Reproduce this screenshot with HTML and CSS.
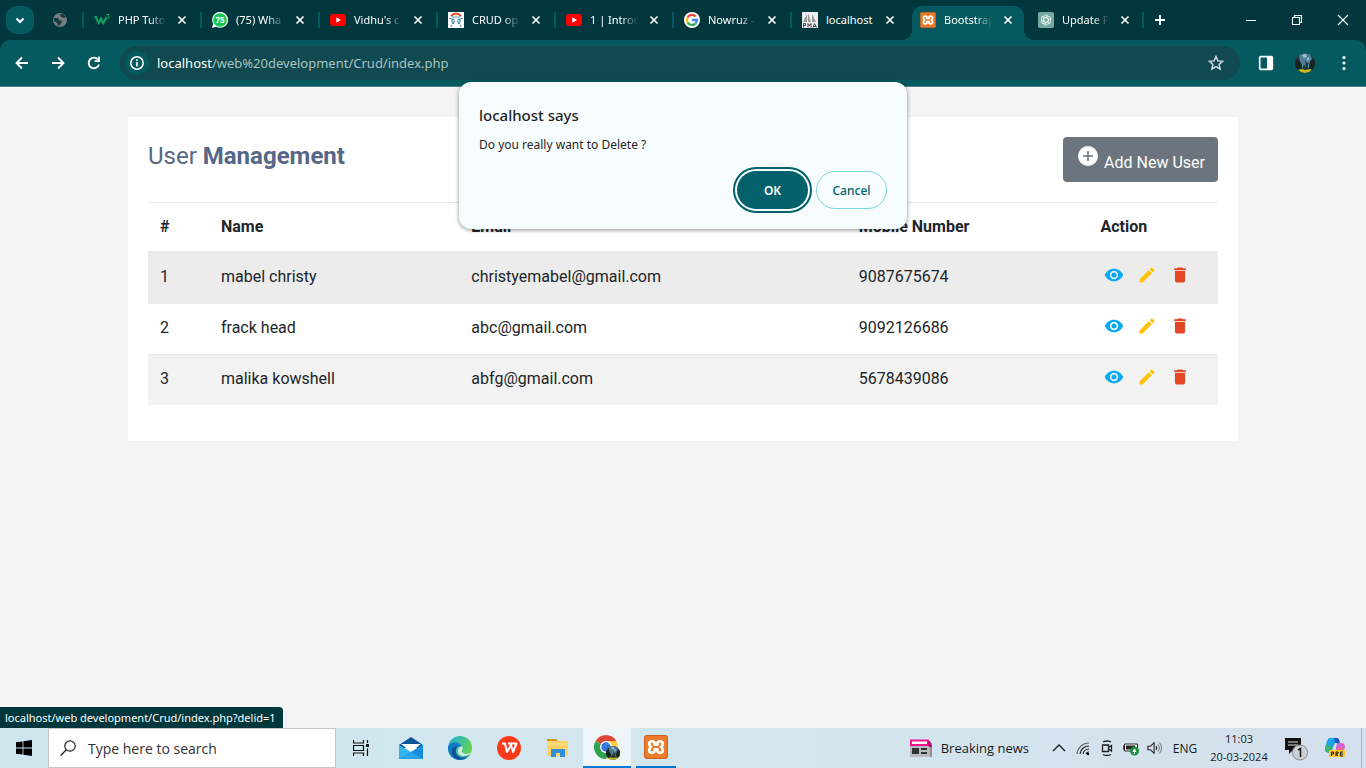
FILE: index.html
```html
<!DOCTYPE html>
<html lang="en">
<head>
<meta charset="utf-8">
<meta name="viewport" content="width=device-width, initial-scale=1">
<title>User Management</title>
<link rel="stylesheet" href="styles.css">
</head>
<body>
<svg class="sprite" aria-hidden="true">
  <symbol id="close" viewBox="0 0 16 16"><path d="M4.500 4.500l7 7M11.500 4.500l-7 7" fill="none" stroke="currentColor" stroke-width="1.700"/></symbol>
  <symbol id="youtube" viewBox="0 0 16 16"><rect y="2" width="16" height="12" rx="3" fill="#f00"/><path d="M6.300 5.300v5.400L11 8z" fill="#fff"/></symbol>
  <symbol id="xampp" viewBox="0 0 24 24"><rect x=".5" y=".5" width="23" height="23" rx="2" fill="#ed7a28" stroke="#c9601c"/><path d="M10.500 7.500C8 5 4.800 6.500 5.300 9.300Q5.600 11 7 12q-1.400 1-1.700 2.700C4.800 17.500 8 19 10.500 16.500V14.300h3v2.200c2.500 2.500 5.700 1 5.200-1.800Q18.400 13 17 12q1.400-1 1.700-2.700C19.200 6.500 16 5 13.500 7.500v2.200h-3z" fill="none" stroke="#fff" stroke-width="2.700" stroke-linejoin="round"/></symbol>
  <symbol id="eye" viewBox="0 0 24 24"><path fill="currentColor" d="M12 4.500C7 4.500 2.730 7.610 1 12c1.730 4.390 6 7.500 11 7.500s9.270-3.110 11-7.500c-1.730-4.390-6-7.500-11-7.500zM12 17a5 5 0 1 1 0-10 5 5 0 0 1 0 10zm0-8a3 3 0 1 0 0 6 3 3 0 0 0 0-6z"/></symbol>
  <symbol id="pencil" viewBox="0 0 24 24"><path fill="currentColor" d="M3 17.250V21h3.750L17.810 9.940l-3.750-3.750zM20.710 7.040a1 1 0 0 0 0-1.410l-2.340-2.340a1 1 0 0 0-1.410 0l-1.830 1.830 3.750 3.750z"/></symbol>
  <symbol id="trash" viewBox="0 0 24 24"><path fill="currentColor" d="M6 19a2 2 0 0 0 2 2h8a2 2 0 0 0 2-2V7H6zM19 4h-3.500l-1-1h-5l-1 1H5v2h14z"/></symbol>
  <symbol id="avatar" viewBox="0 0 20 20"><clipPath id="avatar-clip"><circle cx="10" cy="10" r="10"/></clipPath><g clip-path="url(#avatar-clip)"><path fill="#263437" d="M0 0h20v20H0z"/><path fill="#4f7f98" d="M4 2l5-2 6 1 2 5-2 5-4-2-2 4-4-4z"/><path fill="#92bfd2" d="M7 2l4-1 1 3-3 1zM12 5l2-1v3l-2 1z"/><path fill="#18251e" d="M0 6l5 2 2 7-7 2zM15 8l5-3v10l-5 2z"/><path fill="#7d3f38" d="M10 7h1v7h-1z"/><path fill="#4c92a9" d="M7 11h1v4H7zM13 11h1v4h-1z"/><path fill="#c6b820" d="M3 17l4-1 3 1 5-1 2 1-4 3H6z"/></g></symbol>
</svg>

<header class="browser">
  <div class="tabstrip">
    <button class="tab-search" aria-label="Search tabs"><svg viewBox="0 0 16 16"><path d="M4.500 6.500L8 10l3.500-3.500" fill="none" stroke="currentColor" stroke-width="2"/></svg></button>
    <a class="tab-mini" href="#" aria-label="Pinned page"><svg viewBox="0 0 16 16"><circle cx="8" cy="8" r="7" fill="#777b7e"/><path d="M2 6h4l1 2 3 1-1 3-3 2-1-3-3-2zM8 2l1 3 3 1 2-1-3-3z" fill="#153c42"/></svg></a>
    <div class="tab"><a href="#"><svg viewBox="0 0 16 16"><path d="M0 4h2.800l1.900 5L7 4l2.300 5L12 4l1 2-3.500 7L7 9.500 4.500 13z" fill="#12a35e"/><path d="M12.500 2.500H15l-1 2c2 0 1.500 2.500-1.500 2" fill="none" stroke="#12a35e"/></svg><span class="faded">PHP Tuto</span></a><button aria-label="Close tab"><svg><use href="#close"/></svg></button></div>
    <div class="tab"><a href="#"><svg viewBox="0 0 16 16"><path d="M0 16l1.200-4.200a8 8 0 1 1 3 3z" fill="#e9fff0"/><circle cx="8" cy="8" r="6.800" fill="#16c653"/><text x="8" y="11" class="badge-text">75</text></svg><span class="faded">(75) Wha</span></a><button aria-label="Close tab"><svg><use href="#close"/></svg></button></div>
    <div class="tab"><a href="#"><svg><use href="#youtube"/></svg><span class="faded">Vidhu's c</span></a><button aria-label="Close tab"><svg><use href="#close"/></svg></button></div>
    <div class="tab"><a href="#"><svg viewBox="0 0 16 16"><path fill="#fff" d="M0 0h16v16H0z"/><path d="M3 4q5-5 10 0" fill="none" stroke="#d6542c" stroke-width="2"/><path d="M1 6l3 1M15 6l-3 1M4 5h8M4 13l-1 2M12 13l1 2" stroke="#5c9dbd" stroke-width="1.200"/><path d="M5 6.500q3 2 0 5.500q-3-3.500 0-5.500zM11 6.500q3 2 0 5.500q-3-3.500 0-5.500z" fill="#b9e2f1" stroke="#4789aa"/></svg><span class="faded">CRUD op</span></a><button aria-label="Close tab"><svg><use href="#close"/></svg></button></div>
    <div class="tab"><a href="#"><svg><use href="#youtube"/></svg><span class="faded">1 | Introd</span></a><button aria-label="Close tab"><svg><use href="#close"/></svg></button></div>
    <div class="tab"><a href="#"><svg viewBox="0 0 16 16"><circle cx="8" cy="8" r="8" fill="#fff"/><g fill="none" stroke-width="2.300"><path stroke="#ea4335" d="M3.600 5.500A5 5 0 0 1 11.600 4.500"/><path stroke="#fbbc05" d="M3.600 5.500a5 5 0 0 0 0 5"/><path stroke="#34a853" d="M3.600 10.500a5 5 0 0 0 7.900 1"/><path stroke="#4285f4" d="M11.500 11.500A5 5 0 0 0 13 8H8"/></g></svg><span class="faded">Nowruz -</span></a><button aria-label="Close tab"><svg><use href="#close"/></svg></button></div>
    <div class="tab"><a href="#"><svg viewBox="0 0 16 16"><path fill="#eee" d="M0 0h16v16H0z"/><path fill="#999" d="M1 10l4-8v8zM6 10V1l3 9zM10 10V2l4 8z"/><path d="M1.500 15.500v-4h2v2h-2M6 15.500v-4l1.500 2 1.500-2v4M11 15.500l1.500-4 2 4M12 14.500h2" fill="none" stroke="#444"/></svg><span>localhost</span></a><button aria-label="Close tab"><svg><use href="#close"/></svg></button></div>
    <div class="tab tab-active"><a href="#" aria-current="page"><svg><use href="#xampp"/></svg><span class="faded">Bootstrap</span></a><button aria-label="Close tab"><svg><use href="#close"/></svg></button></div>
    <div class="tab tab-last"><a href="#"><svg viewBox="0 0 16 16"><rect width="16" height="16" rx="2" fill="#74aa9c"/><g fill="none" stroke="#e9f4f0" stroke-width=".9"><path id="petal" d="M7.800 5.400l2.600 1.500v3.500a2.600 2.600 0 0 1-4.700 1.500"/><use href="#petal" transform="rotate(60 8 8)"/><use href="#petal" transform="rotate(120 8 8)"/><use href="#petal" transform="rotate(180 8 8)"/><use href="#petal" transform="rotate(240 8 8)"/><use href="#petal" transform="rotate(300 8 8)"/></g></svg><span class="faded">Update P</span></a><button aria-label="Close tab"><svg><use href="#close"/></svg></button></div>
    <button class="new-tab" aria-label="New tab"><svg viewBox="0 0 16 16"><path d="M8 3v10M3 8h10" stroke="currentColor" stroke-width="1.800"/></svg></button>
    <div class="window-controls">
      <button aria-label="Minimize"><svg viewBox="0 0 12 12"><path d="M1 6.500h10" stroke="currentColor"/></svg></button>
      <button aria-label="Restore"><svg viewBox="0 0 12 12"><path d="M1.500 3.500h7v7h-7zM3.500 3.500v-2h7v7h-2" fill="none" stroke="currentColor" stroke-width="1.100"/></svg></button>
      <button aria-label="Close window"><svg viewBox="0 0 12 12"><path d="M1 1l10 10M11 1L1 11" stroke="currentColor" stroke-width="1.100"/></svg></button>
    </div>
  </div>
  <div class="toolbar">
    <button class="tool" aria-label="Back"><svg viewBox="0 0 16 16"><path d="M14 8H3M8 2.500L2.500 8 8 13.500" fill="none" stroke="currentColor" stroke-width="1.900"/></svg></button>
    <button class="tool" aria-label="Forward"><svg viewBox="0 0 16 16"><path d="M2 8h11M8 2.500L13.500 8 8 13.500" fill="none" stroke="currentColor" stroke-width="1.900"/></svg></button>
    <button class="tool" aria-label="Reload"><svg viewBox="0 0 16 16"><path d="M13 9.500A5.300 5.300 0 1 1 12 4.500" fill="none" stroke="currentColor" stroke-width="1.900"/><path d="M14 1.500V7H8.500V5.200h3.700V1.500z" fill="currentColor"/></svg></button>
    <div class="omnibox">
      <button class="site-info" aria-label="Site information"><svg viewBox="0 0 16 16"><circle cx="8" cy="8" r="6.200" fill="none" stroke="currentColor" stroke-width="1.500"/><path d="M8 7v4.500M8 4.300v1.700" stroke="currentColor" stroke-width="1.600"/></svg></button>
      <div class="url"><b>localhost</b>/web%20development/Crud/index.php</div>
      <button class="star" aria-label="Bookmark"><svg viewBox="0 0 16 16"><path d="M8 1.500l1.900 4.400 4.700.4-3.600 3.100 1.100 4.700L8 11.600l-4.100 2.500L5 9.400 1.400 6.300l4.700-.4z" fill="none" stroke="currentColor" stroke-width="1.400"/></svg></button>
    </div>
    <button class="tool side" aria-label="Side panel"><svg viewBox="0 0 16 16"><rect x="1.700" y="1.700" width="12.600" height="12.600" rx="1" fill="none" stroke="currentColor" stroke-width="1.700"/><path d="M9 1.500h5.500v13H9z" fill="currentColor"/></svg></button>
    <button class="tool profile" aria-label="Profile"><svg><use href="#avatar"/></svg></button>
    <button class="tool menu" aria-label="Menu"><svg viewBox="0 0 16 16"><g fill="currentColor"><circle cx="8" cy="2.500" r="1.600"/><circle cx="8" cy="8" r="1.600"/><circle cx="8" cy="13.500" r="1.600"/></g></svg></button>
  </div>
</header>

<main class="page">
  <section class="card">
    <div class="card-head">
      <h1>User <b>Management</b></h1>
      <a class="add-user" href="#"><svg viewBox="0 0 24 24"><path fill="currentColor" fill-rule="evenodd" d="M12 2a10 10 0 1 0 0 20 10 10 0 0 0 0-20zM11.200 7h1.600v4.200H17v1.600h-4.200V17h-1.600v-4.200H7v-1.600h4.200z"/></svg><span>Add New User</span></a>
    </div>
    <table class="users">
      <colgroup><col class="c-id"><col class="c-name"><col class="c-email"><col class="c-mobile"><col class="c-action"></colgroup>
      <thead><tr><th>#</th><th>Name</th><th>Email</th><th>Mobile Number</th><th>Action</th></tr></thead>
      <tbody>
        <tr class="hovered"><td>1</td><td>mabel christy</td><td>christyemabel@gmail.com</td><td>9087675674</td><td><div class="actions"><a class="view" href="#" aria-label="View"><svg><use href="#eye"/></svg></a><a class="edit" href="#" aria-label="Edit"><svg><use href="#pencil"/></svg></a><a class="delete" href="#" aria-label="Delete"><svg><use href="#trash"/></svg></a></div></td></tr>
        <tr><td>2</td><td>frack head</td><td>abc@gmail.com</td><td>9092126686</td><td><div class="actions"><a class="view" href="#" aria-label="View"><svg><use href="#eye"/></svg></a><a class="edit" href="#" aria-label="Edit"><svg><use href="#pencil"/></svg></a><a class="delete" href="#" aria-label="Delete"><svg><use href="#trash"/></svg></a></div></td></tr>
        <tr><td>3</td><td>malika kowshell</td><td>abfg@gmail.com</td><td>5678439086</td><td><div class="actions"><a class="view" href="#" aria-label="View"><svg><use href="#eye"/></svg></a><a class="edit" href="#" aria-label="Edit"><svg><use href="#pencil"/></svg></a><a class="delete" href="#" aria-label="Delete"><svg><use href="#trash"/></svg></a></div></td></tr>
      </tbody>
    </table>
  </section>
  <div class="link-status">localhost/web development/Crud/index.php?delid=1</div>
</main>

<div class="dialog" role="alertdialog" aria-labelledby="dialog-title" aria-describedby="dialog-text">
  <h2 id="dialog-title">localhost says</h2>
  <p id="dialog-text">Do you really want to Delete ?</p>
  <div class="dialog-buttons"><button class="ok">OK</button><button class="cancel">Cancel</button></div>
</div>

<footer class="taskbar">
  <button class="start" aria-label="Start"><svg viewBox="0 0 16 16"><path d="M0 2.300l6.600-.9v6.100H0zM7.400 1.300L16 0v7.500H7.400zM0 8.400h6.600v6.200L0 13.700zM7.400 8.400H16V16l-8.600-1.300z"/></svg></button>
  <label class="search"><svg viewBox="0 0 16 16"><circle cx="10" cy="6" r="5.200" fill="none" stroke="#222" stroke-width="1.200"/><path d="M6.300 9.700L.7 15.500" stroke="#222" stroke-width="1.300"/></svg><input type="text" placeholder="Type here to search" aria-label="Type here to search"></label>
  <nav class="apps">
    <button class="task-view" aria-label="Task view"><svg viewBox="0 0 16 16"><path d="M.5 0v3h10V0M.5 16v-3h10v3M.5 5.500h10v5H.5zM14.500 0v3M14.500 8.500V16" fill="none" stroke="#111" stroke-width="1.200"/><path d="M13 4h3v3h-3z" fill="#111"/></svg></button>
    <button aria-label="Mail"><svg viewBox="0 0 24 24"><path d="M0 9l12-8 12 8v3H0z" fill="#0b5394"/><path d="M2 8h20l-10 8z" fill="#fff"/><path d="M0 9l12 7 12-7v14H0z" fill="#35b4ed"/><path d="M24 9v14H0l12-7z" fill="#168cdc"/><path d="M0 23l12-7 12 7z" fill="#2aa5e8"/></svg></button>
    <button aria-label="Edge"><svg viewBox="0 0 24 24"><defs><linearGradient id="edge-a" x2="1" y2=".6"><stop stop-color="#1ba8df"/><stop offset="1" stop-color="#69d64d"/></linearGradient></defs><circle cx="12" cy="12" r="12" fill="url(#edge-a)"/><path d="M0 12C1 5 12 5 14 11c-4-2-7 1-6 5 1 5 8 7 14 2-3 5-7 6-10 6C5 24 0 19 0 12z" fill="#1276c4"/><path d="M8 13c-2 6 4 11 10 9-8 4-15-1-14-7 0-3 3-5 6-5-1 1-2 2-2 3z" fill="#124f99"/><path d="M14 10c2 3-1 4 0 6 2 3 7 2 9 0l-1 2c-4 3-12 3-12-3 0-3 2-4 4-5z" fill="#d4e9ee"/></svg></button>
    <button aria-label="WPS Office"><svg viewBox="0 0 24 24"><circle cx="12" cy="12" r="12" fill="#fb3a18"/><path d="M5 7.500h3L10 16l4-7 2 7 3.500-8.500H11" fill="none" stroke="#fff" stroke-width="2" stroke-linejoin="round"/></svg></button>
    <button aria-label="File Explorer"><svg viewBox="0 0 24 24"><path d="M1 3h9l2 2H1z" fill="#d79300"/><path d="M1 5h21v15H1z" fill="#ffd264"/><path d="M1 7h21v2H1z" fill="#ffdc82"/><path d="M5 21v-8h14v8h-5v-4h-4v4z" fill="#2f8ed8"/></svg></button>
    <button class="app-current" aria-label="Chrome"><svg viewBox="0 0 28 28"><circle cx="13" cy="14" r="12" fill="#fff"/><path d="M13 14L2.600 8a12 12 0 0 1 20.800 0z" fill="#df4739"/><path d="M13 14L2.600 8A12 12 0 0 0 13 26l5-9z" fill="#2ca44f"/><path d="M13 8h10.400A12 12 0 0 1 13 26l5-9z" fill="#fdd044"/><circle cx="13" cy="14" r="6" fill="#fff"/><circle cx="13" cy="14" r="4.700" fill="#3478df"/><use href="#avatar" x="13" y="13" width="14" height="14"/></svg></button>
    <button class="app-open" aria-label="XAMPP"><svg><use href="#xampp"/></svg></button>
  </nav>
  <div class="tray">
    <button class="news"><svg viewBox="0 0 22 18"><path d="M2 4h20v14H2z" fill="#8b8d91"/><path d="M0 6h20v12H0z" fill="#b9babd"/><path d="M1 1.500h17V6H1z" fill="#fff" stroke="#f0148a" stroke-width="2"/><path d="M18 2h2l2 6h-3z" fill="#b40069"/><path d="M2 9h7v6H2zM11 9h6v2h-6zM11 13h6v2h-6z" fill="#333"/></svg><span>Breaking news</span></button>
    <button class="chevron" aria-label="Hidden icons"><svg viewBox="0 0 14 16"><path d="M1 11l6-6 6 6" fill="none" stroke="#222" stroke-width="1.400"/></svg></button>
    <button aria-label="Network"><svg viewBox="0 0 16 16"><g fill="none" stroke="#222" stroke-width="1.200"><path d="M2 14A12 12 0 0 1 14 3" stroke="#666"/><path d="M5 14a9 9 0 0 1 9-8M8 14a6 6 0 0 1 6-5M11 14a3 3 0 0 1 3-2"/></g><circle cx="13" cy="14" r="1.200"/></svg></button>
    <button aria-label="Camera"><svg viewBox="0 0 16 16"><path d="M3.500 5h6v6.500h-6zM9.500 7.500l3-2v5.500l-3-2M4 2q4-2 8 0M4 14.500q4 2 8 0" fill="none" stroke="#222" stroke-width="1.300"/></svg></button>
    <button aria-label="Battery"><svg viewBox="0 0 16 16"><path d="M1.500 4h13v7h-13zM0 6h1v3H0z" fill="#fff" stroke="#222"/><path d="M3 5.500h9v4H3z" fill="#222"/><circle cx="11.500" cy="11" r="4.500" fill="#18933f"/><path d="M10 11.500l1.500-2.500 1.500 2.500zM11.500 9v5" fill="#fff" stroke="#fff"/></svg></button>
    <button aria-label="Volume"><svg viewBox="0 0 18 16"><path d="M1 6h3l4-4v12l-4-4H1zM10 6q2 2 0 4" fill="none" stroke="#222" stroke-width="1.200"/><path d="M12 4q4 4 0 8M14 2q5 6 0 12" fill="none" stroke="#888" stroke-width="1.200"/></svg></button>
    <button class="language">ENG</button>
    <button class="clock"><time>11:03</time><time>20-03-2024</time></button>
    <button class="notifications" aria-label="Notifications"><svg viewBox="0 0 26 26"><path d="M1 3h16v12H9l-4 4v-4H1z" fill="#111"/><path d="M4 7h10M4 10h10" stroke="#ddd"/><circle cx="16" cy="17.500" r="7.500" fill="#cdd0d4" stroke="#85888d"/><path d="M14 15l2.500-1.500V22" fill="none" stroke="#111" stroke-width="1.500"/></svg></button>
    <button class="copilot" aria-label="Copilot"><svg viewBox="0 0 22 22"><path d="M6 1h6q2 0 3 5h-4L7 15H4q-4 0-3-4l2-7q1-3 3-3z" fill="#1aa5ea"/><path d="M2 8l-1 4q0 4 4 4h2l2-6z" fill="#45b36b"/><path d="M10 1h3q2 0 3 5h-5z" fill="#1956cc"/><path d="M13 6h4q4 0 4 4l-2 6h-8z" fill="#d063d6"/><path d="M15 10l5 2-2 4h-7z" fill="#f86f72"/><rect x="5" y="13" width="16" height="7" rx="1" fill="#ffc52d"/><path d="M7.500 19v-4h2v2h-2M12 19v-4h2v2h-2l2 2M19 15h-2.500v4H19M16.500 17H19" fill="none" stroke="#222"/></svg></button>
  </div>
</footer>
</body>
</html>
```
FILE: styles.css
```css
* { box-sizing: border-box; }

body {
  display: flex;
  flex-direction: column;
  min-height: 100vh;
  margin: 0;
  background: #f4f4f4;
  font-family: "Noto Sans", "Open Sans", sans-serif;
}

button {
  display: flex;
  flex: none;
  align-items: center;
  justify-content: center;
  padding: 0;
  border: 0;
  background: none;
  color: inherit;
  font: inherit;
}

a { color: inherit; text-decoration: none; }
svg { display: block; flex: none; width: 16px; height: 16px; }
.sprite { position: absolute; width: 0; height: 0; }

/* Browser frame */
.browser { background: #02383d; color: #fff; }

.tabstrip {
  display: flex;
  align-items: center;
  height: 40px;
  padding-left: 6px;
}

.tab-search {
  width: 28px;
  height: 28px;
  border-radius: 10px;
  background: #055a5f;
}

.tab-mini {
  display: flex;
  justify-content: center;
  width: 48px;
  padding-left: 4px;
}

.tab {
  display: flex;
  flex: 0 1 118px;
  align-items: center;
  min-width: 0;
  height: 16px;
  padding: 0 10px;
  border-left: 2px solid #055a5f;
  font-size: 11px;
}

.tab a {
  display: flex;
  flex: 1;
  align-items: center;
  gap: 8px;
  min-width: 0;
}

.tab span {
  flex: 1;
  min-width: 0;
  white-space: nowrap;
  line-height: 16px;
}

.tab .faded {
  -webkit-mask-image: linear-gradient(to right, #000 65%, transparent);
  mask-image: linear-gradient(to right, #000 65%, transparent);
}

.tab button { margin-left: 8px; }
.tab-last { border-left-color: transparent; border-right: 2px solid #055a5f; padding-right: 9px; }

.badge-text {
  fill: #fff;
  font-size: 8px;
  font-weight: 700;
  text-anchor: middle;
}

.tab-active {
  position: relative;
  flex-basis: 112px;
  align-self: flex-end;
  height: 34px;
  margin: 0 2px 0 4px;
  padding: 0 8px 6px;
  border: 0;
  border-radius: 10px 10px 0 0;
  background: #055a5f;
}

.tab-active::before,
.tab-active::after {
  content: "";
  position: absolute;
  bottom: 0;
  width: 10px;
  height: 10px;
}
.tab-active::before { right: 100%; background: radial-gradient(circle at 0 0, transparent 10px, #055a5f 10px); }
.tab-active::after { left: 100%; background: radial-gradient(circle at 100% 0, transparent 10px, #055a5f 10px); }

.new-tab { width: 32px; height: 32px; }
.window-controls { display: flex; margin-left: auto; }
.window-controls button { width: 46px; height: 40px; }
.window-controls svg { width: 12px; height: 12px; }

.toolbar {
  display: flex;
  align-items: center;
  height: 47px;
  padding: 0 4px;
  border-bottom: 1px solid #4b8388;
  border-radius: 10px 10px 0 0;
  background: #055a5f;
}

.tool { width: 36px; height: 34px; }

.omnibox {
  display: flex;
  flex: 1;
  align-items: center;
  height: 34px;
  margin-left: 8px;
  padding: 0 12px 0 5px;
  border-radius: 17px;
  background: #10494f;
}

.site-info { width: 24px; height: 24px; border-radius: 12px; background: #055a5f; }
.url { flex: 1; margin-left: 8px; color: #a9c3c5; font-size: 13px; }
.url b { color: #fff; font-weight: 400; }
.star { width: 24px; color: #d5dfe0; }
.side { margin-left: 8px; }
.profile { width: 42px; }
.profile svg { width: 20px; height: 20px; }

/* Page */
.page {
  position: relative;
  flex: 1;
  padding: 30px 24px;
  color: #212529;
  font-family: Roboto, sans-serif;
  font-size: 16px;
}

.card {
  max-width: 1110px;
  margin: 0 auto;
  padding: 20px 20px 36px;
  background: #fff;
}

.card-head {
  display: flex;
  align-items: flex-start;
  justify-content: space-between;
  padding-bottom: 20px;
}

h1 {
  margin: 5px 0 0;
  color: #566787;
  font-size: 24px;
  font-weight: 400;
  line-height: 28px;
}
h1 b { font-weight: 700; }

.add-user {
  display: flex;
  gap: 4px;
  height: 45px;
  padding: 7px 13px 0;
  border-radius: 4px;
  background: #6c757d;
  color: #fff;
}
.add-user svg { width: 24px; height: 24px; }
.add-user span { padding-top: 7px; line-height: 24px; }

.users {
  width: 100%;
  border-collapse: separate;
  border-spacing: 0;
  table-layout: fixed;
}
.c-id { width: 5.700%; }
.c-name { width: 23.400%; }
.c-email { width: 36.200%; }
.c-mobile { width: 22.600%; }
.c-action { width: 12.100%; }

.users th,
.users td {
  height: 51px;
  padding: 12px 12px 0;
  border-top: 1px solid #e9e9e9;
  line-height: 24px;
  text-align: left;
  vertical-align: top;
}
.users th { height: 50px; font-weight: 700; border-bottom: 1px solid #e9e9e9; }
.users tbody tr:nth-child(odd) { background: #f2f2f2; }
.users tbody tr.hovered { background: #ececec; }

.actions { display: flex; gap: 13px; padding-left: 3px; }
.actions svg { width: 20px; height: 20px; }
.view { color: #03a9f4; }
.edit { color: #ffc107; }
.delete { color: #e34724; }

.link-status {
  position: absolute;
  bottom: 0;
  left: 0;
  padding: 0 7px 0 5px;
  border-radius: 0 4px 0 0;
  background: #02383d;
  color: #fff;
  font-family: "Noto Sans", "Open Sans", sans-serif;
  font-size: 11px;
  line-height: 21px;
}

/* Confirm dialog */
.dialog {
  position: absolute;
  top: 82px;
  right: 0;
  left: 0;
  width: 448px;
  margin: 0 auto;
  padding: 22px 20px 20px;
  border-radius: 12px;
  background: #f7fdff;
  box-shadow: 0 1px 4px rgba(0, 0, 0, .45);
  color: #1f1f1f;
}
.dialog h2 { margin: 0; font-size: 15px; font-weight: 500; line-height: 22px; }
.dialog p { margin: 9px 0 16px; font-size: 12px; line-height: 20px; }
.dialog-buttons { display: flex; justify-content: flex-end; gap: 8px; }
.dialog-buttons button {
  min-width: 71px;
  height: 38px;
  border-radius: 19px;
  font-size: 12px;
  font-weight: 600;
}
.ok { background: #02616a; color: #fff; outline: 2px solid #02616a; outline-offset: 2px; }
.dialog-buttons .cancel { border: 1px solid #7bd6e0; color: #02616a; font-weight: 500; }

/* Taskbar */
.taskbar {
  display: flex;
  height: 40px;
  padding-right: 4px;
  background: linear-gradient(90deg, #cee7ef, #d3e6ef 50%, #d4e0ed);
  color: #1a1a1a;
  font-family: "Open Sans", "Noto Sans", sans-serif;
}
.start { width: 48px; }
.search {
  display: flex;
  flex: 0 1 288px;
  align-items: center;
  gap: 12px;
  min-width: 0;
  padding-left: 11px;
  border: 1px solid #c4c8ca;
  background: #fff;
}
.search input {
  flex: 1;
  min-width: 0;
  padding: 0;
  border: 0;
  outline: 0;
  background: none;
  font: 14px "Open Sans", "Noto Sans", sans-serif;
}
.search input::placeholder { color: #333; opacity: 1; }

.apps { display: flex; gap: 1px; }
.apps button { width: 48px; }
.apps .task-view { width: 50px; }
.apps svg { width: 24px; height: 24px; }
.apps .task-view svg { width: 16px; height: 16px; }
.apps .app-current { border-bottom: 2px solid #0078d4; background: #edf5f9; }
.apps .app-current svg { width: 28px; height: 28px; }
.apps .app-open { width: 40px; margin-left: 4px; border-bottom: 2px solid #0078d4; }

.tray { display: flex; margin-left: auto; border-right: 1px solid #abb6c0; }
.tray button { width: 24px; }
.tray .news { gap: 9px; width: auto; margin-right: 18px; font-size: 13px; }
.news svg { width: 22px; height: 18px; }
.tray .language { width: 36px; font-size: 12px; }
.tray .clock { flex-direction: column; width: 72px; font-size: 11px; line-height: 18px; }
.tray .notifications { width: 44px; }
.notifications svg { width: 26px; height: 26px; }
.tray .copilot { width: 32px; margin-right: 10px; }
.copilot svg { width: 22px; height: 22px; }
```
